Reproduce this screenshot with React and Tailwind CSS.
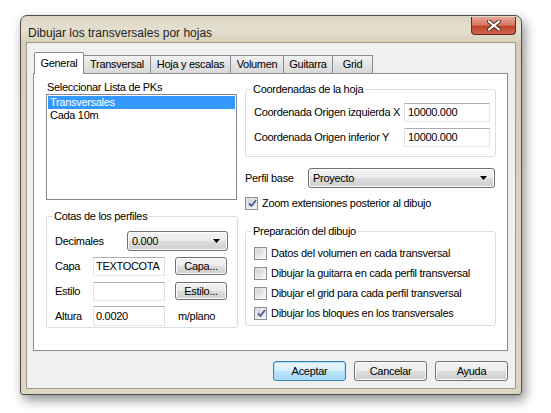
import React from "react";

const FONT = { fontFamily: '"Liberation Sans", Arial, sans-serif' };

function Checkbox({ checked }) {
  return (
    <span className="w-[13px] h-[13px] border border-[#8e8f8f] bg-[linear-gradient(135deg,#dcdcdc,#fbfbfb)] p-[2px] flex shrink-0">
      <span className="flex-1 bg-[linear-gradient(135deg,#cbcfd5,#f6f6f6)] flex items-center justify-center">
        {checked && (
          <svg width="9" height="9" viewBox="0 0 9 9">
            <path d="M1 4.5 L3.5 7 L8 1" stroke="#4a5f97" strokeWidth="1.8" fill="none" />
          </svg>
        )}
      </span>
    </span>
  );
}

function CheckRow({ checked, children }) {
  return (
    <div className="flex items-center gap-[4px] h-[20px] whitespace-nowrap">
      <Checkbox checked={checked} />
      <span>{children}</span>
    </div>
  );
}

function Btn({ children, primary, className = "" }) {
  return (
    <div
      className={`flex items-center justify-center rounded-[3px] border ${
        primary
          ? "border-[#3c7fb1] bg-[linear-gradient(#eaf6fd_0%,#d9f0fc_50%,#bee6fd_51%,#a7d9f5_100%)] shadow-[inset_0_0_0_1px_#a8e0fb]"
          : "border-[#707070] bg-[linear-gradient(#f2f2f2_0%,#ebebeb_50%,#dddddd_51%,#cfcfcf_100%)] shadow-[inset_0_0_0_1px_#fcfcfc]"
      } ${className}`}
    >
      {children}
    </div>
  );
}

function Combo({ value, className = "" }) {
  return (
    <div
      className={`flex items-center rounded-[3px] border border-[#707070] bg-[linear-gradient(#f2f2f2_0%,#ebebeb_50%,#dddddd_51%,#cfcfcf_100%)] shadow-[inset_0_0_0_1px_#fcfcfc] pl-[4px] pr-[7px] ${className}`}
    >
      <span className="flex-1">{value}</span>
      <svg width="7" height="4" viewBox="0 0 7 4">
        <path d="M0 0 H7 L3.5 4 Z" fill="#000" />
      </svg>
    </div>
  );
}

function Input({ value, className = "" }) {
  return (
    <div
      className={`flex items-center border border-[#abadb3] border-t-[#abadb3] border-l-[#e2e3ea] border-r-[#dbdfe6] border-b-[#e3e9ef] bg-white px-[3px] whitespace-nowrap overflow-hidden ${className}`}
    >
      {value}
    </div>
  );
}

function Group({ title, className = "", children }) {
  return (
    <fieldset className={`border border-[#d5dfe5] rounded-[3px] p-0 ${className}`}>
      <legend className="ml-[5px] px-[2px] leading-[13px]">{title}</legend>
      {children}
    </fieldset>
  );
}

const tabs = [
  { label: "General", w: 50 },
  { label: "Transversal", w: 67 },
  { label: "Hoja y escalas", w: 80 },
  { label: "Volumen", w: 53 },
  { label: "Guitarra", w: 49 },
  { label: "Grid", w: 40 },
];

export default function App() {
  return (
    <div className="w-[551px] h-[413px] bg-white pl-[20px] pt-[15px] text-[11px] tracking-[-0.3px] text-black" style={FONT}>
      <div className="w-[502px] h-[380px] rounded-t-[7px] rounded-b-[3px] border border-[#4d4d4d] bg-[linear-gradient(180deg,#dcd7c4_0px,#e4dfcf_14px,#d8d0b6_27px,#ddd6c0_100%)] shadow-[3px_5px_12px_rgba(0,0,0,0.45)] flex flex-col px-[5px] pb-[5px]">
        {/* title bar */}
        <div className="h-[26px] flex items-start shrink-0">
          <span className="mt-[8px] ml-[2px] text-[12px] tracking-normal text-[#1e1e1e]">Dibujar los transversales por hojas</span>
          <div className="ml-auto mt-[1px] w-[45px] h-[18px] rounded-b-[4px] border border-t-0 border-[#5e2a22] bg-[linear-gradient(#e8a697_0%,#d47a66_45%,#c0432a_55%,#d0644b_100%)] flex items-center justify-center">
            <svg width="14" height="11" viewBox="0 0 14 11">
              <path d="M2 1.5 L12 9.5 M12 1.5 L2 9.5" stroke="#4b2a24" strokeWidth="4" strokeLinecap="square" />
              <path d="M2 1.5 L12 9.5 M12 1.5 L2 9.5" stroke="#ffffff" strokeWidth="2" strokeLinecap="square" />
            </svg>
          </div>
        </div>

        {/* client */}
        <div className="flex-1 bg-[#f0f0f0] border border-[#a09a88] flex flex-col pl-[6px] pr-[7px]">
          {/* tabs */}
          <div className="flex items-end h-[30px] pl-[1px]">
            {tabs.map((t, i) =>
              i === 0 ? (
                <div
                  key={t.label}
                  style={{ width: t.w }}
                  className="h-[22px] -mb-px z-10 bg-white border border-[#898c95] border-b-0 rounded-t-[2px] flex items-center justify-center pb-[1px] relative"
                >
                  {t.label}
                </div>
              ) : (
                <div
                  key={t.label}
                  style={{ width: t.w }}
                  className="h-[18px] bg-[linear-gradient(#f2f2f2,#e3e3e3_50%,#d9d9d9)] border border-[#898c95] border-l-0 border-b-0 flex items-center justify-center"
                >
                  {t.label}
                </div>
              )
            )}
          </div>

          {/* panel */}
          <div className="h-[278px] bg-white border border-[#898c95] flex pl-[12px] pt-[5px]">
            {/* left column */}
            <div className="w-[191px] flex flex-col">
              <div className="h-[14px] pl-[1px]">Seleccionar Lista de PKs</div>
              <div className="h-[106px] border border-[#828790] p-[1px] mt-[1px]">
                <div className="bg-[#3399ff] text-white h-[13px] leading-[13px] pl-[2px]">Transversales</div>
                <div className="h-[13px] leading-[13px] pl-[2px]">Cada 10m</div>
              </div>
              <Group title="Cotas de los perfiles" className="mt-[10px] h-[118px]">
                <div className="pl-[8px] pr-[9px]">
                  <div className="flex items-center h-[20px] mt-[8px]">
                    <span className="w-[72px]">Decimales</span>
                    <Combo value="0.000" className="w-[101px] h-[20px]" />
                  </div>
                  <div className="flex items-center h-[20px] mt-[5px]">
                    <span className="w-[38px]">Capa</span>
                    <Input value="TEXTOCOTA" className="w-[72px] h-[19px] !px-[2px]" />
                    <Btn className="ml-[10px] w-[52px] h-[18px]">Capa...</Btn>
                  </div>
                  <div className="flex items-center h-[20px] mt-[5px]">
                    <span className="w-[38px]">Estilo</span>
                    <Input value="" className="w-[72px] h-[19px]" />
                    <Btn className="ml-[10px] w-[52px] h-[18px]">Estilo...</Btn>
                  </div>
                  <div className="flex items-center h-[20px] mt-[5px]">
                    <span className="w-[38px]">Altura</span>
                    <Input value="0.0020" className="w-[72px] h-[20px] !px-[2px]" />
                    <span className="ml-[13px]">m/plano</span>
                  </div>
                </div>
              </Group>
            </div>

            {/* right column */}
            <div className="w-[251px] ml-[8px] flex flex-col">
              <Group title="Coordenadas de la hoja" className="mt-[4px] h-[74px]">
                <div className="pl-[8px] pr-[5px]">
                  <div className="flex items-center h-[19px] mt-[7px]">
                    <span className="flex-1 whitespace-nowrap">Coordenada Origen izquierda X</span>
                    <Input value="10000.000" className="w-[86px] h-[19px]" />
                  </div>
                  <div className="flex items-center h-[19px] mt-[6px]">
                    <span className="flex-1 whitespace-nowrap">Coordenada Origen inferior Y</span>
                    <Input value="10000.000" className="w-[86px] h-[19px]" />
                  </div>
                </div>
              </Group>
              <div className="flex items-center h-[20px] mt-[11px]">
                <span className="w-[63px]">Perfil base</span>
                <Combo value="Proyecto" className="w-[187px] h-[20px]" />
              </div>
              <div className="mt-[5px] pl-[0px]">
                <CheckRow checked>Zoom extensiones posterior al dibujo</CheckRow>
              </div>
              <Group title="Preparación del dibujo" className="mt-[12px] h-[101px]">
                <div className="pl-[8px] mt-[5px] flex flex-col">
                  <CheckRow>Datos del volumen en cada transversal</CheckRow>
                  <CheckRow>Dibujar la guitarra en cada perfil transversal</CheckRow>
                  <CheckRow>Dibujar el grid para cada perfil transversal</CheckRow>
                  <CheckRow checked>Dibujar los bloques en los transversales</CheckRow>
                </div>
              </Group>
            </div>
          </div>

          {/* buttons */}
          <div className="flex justify-end gap-[8px] mt-[10px]">
            <Btn primary className="w-[73px] h-[20px]">Aceptar</Btn>
            <Btn className="w-[73px] h-[20px]">Cancelar</Btn>
            <Btn className="w-[73px] h-[20px]">Ayuda</Btn>
          </div>
        </div>
      </div>
    </div>
  );
}
